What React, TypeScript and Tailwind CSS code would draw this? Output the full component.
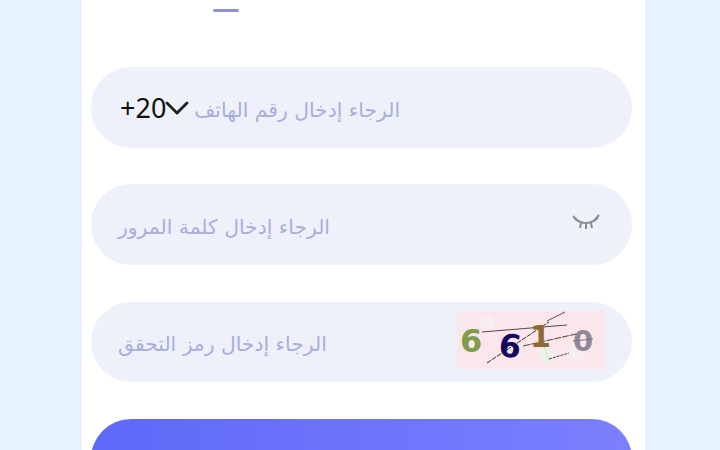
/**
 * Login form (phone, password, captcha), Arabic placeholders.
 */

import { ChevronDown } from "lucide-react";

const arabicFont = "font-['Noto_Sans','DejaVu_Sans',sans-serif]";

function Field({ children }: { children: React.ReactNode }) {
  return (
    <div className="flex h-[80.8px] items-center rounded-[40px] bg-[#eef1fa] pl-[27px] pr-[27px]">
      {children}
    </div>
  );
}

function Placeholder({ text }: { text: string }) {
  return (
    <span dir="rtl" className="mt-[5px] font-['DejaVu_Sans',sans-serif] text-[20.3px] leading-none whitespace-nowrap text-[#a9aeda]">
      {text}
    </span>
  );
}

function EyeClosed() {
  return (
    <svg width="28" height="18" viewBox="0 0 28 18" fill="none" stroke="#8b8d96" strokeWidth="2">
      <path d="M2 4 Q14 14 26 4" />
      <path d="M1 2 L6 7" />
      <path d="M27 1 L22 7" />
      <path d="M9 9 L8 14" />
      <path d="M14 10 L14 15" />
      <path d="M19 9 L20 14" />
    </svg>
  );
}

function Captcha() {
  return (
    <svg width="148" height="58" viewBox="0 0 148 58" className="bg-[#fbe6ec]">
      <circle cx="30" cy="12" r="7" fill="#f8eef1" />
      <circle cx="120" cy="40" r="9" fill="#f8eef1" />
      <circle cx="90" cy="44" r="8" fill="#eef2ea" />
      <path d="M25 21 L110 14" stroke="#4a4a4a" strokeWidth="1" />
      <path d="M30 52 L92 11" stroke="#333" strokeWidth="1" strokeDasharray="5 1" />
      <path d="M66 35 L128 21" stroke="#444" strokeWidth="1" strokeDasharray="7 1" />
      <path d="M90 10 L108 1" stroke="#555" strokeWidth="1" />
      <path d="M92 48 L112 42" stroke="#444" strokeWidth="1" strokeDasharray="3 1" />
      <path d="M87 34 L92 50" stroke="#cfe3c8" strokeWidth="1" />
      <text x="3" y="41" fontFamily="DejaVu Sans" fontWeight="700" fontSize="32" fill="#7f9c4a">6</text>
      <text x="42" y="46" fontFamily="DejaVu Sans" fontWeight="700" fontSize="32" fill="#16085f" transform="rotate(8 52 34)">6</text>
      <text x="73" y="36" fontFamily="DejaVu Sans" fontWeight="700" fontSize="30" fill="#8c6a36">1</text>
      <text x="116" y="40" fontFamily="DejaVu Sans" fontWeight="700" fontSize="29" fill="#8f8795">0</text>
      <path d="M116 30 L136 28" stroke="#777" strokeWidth="1" />
    </svg>
  );
}

export default function App() {
  return (
    <div className="h-[450px] w-[720px] overflow-hidden bg-[#e6f2ff]">
      <div className={`ml-[82px] h-full w-[563px] bg-white pl-[9px] pr-[13px] ${arabicFont}`}>
        <div className="ml-[122px] h-[67.3px] pt-[9px]">
          <div className="h-[3px] w-[26px] rounded-full bg-[#8f90d6]" />
        </div>

        <div className="flex flex-col gap-[36.4px]">
          <Field>
            <div className="ml-[2px] flex items-center">
              <span className="font-['Noto_Sans',sans-serif] text-[27px] leading-none text-[#111]">+20</span>
              <ChevronDown className="-ml-[9px] -mr-[3px] h-[40px] w-[40px] shrink-0 text-[#222]" strokeWidth={1.7} />
              <Placeholder text="الرجاء إدخال رقم الهاتف" />
            </div>
          </Field>

          <Field>
            <Placeholder text="الرجاء إدخال كلمة المرور" />
            <div className="mb-[4px] ml-auto mr-[5px]">
              <EyeClosed />
            </div>
          </Field>

          <Field>
            <Placeholder text="الرجاء إدخال رمز التحقق" />
            <div className="ml-auto mb-[4px]">
              <Captcha />
            </div>
          </Field>

          <button className="h-[81px] rounded-[40px] bg-gradient-to-r from-[#5f68f8] to-[#7b80ff]" />
        </div>
      </div>
    </div>
  );
}
